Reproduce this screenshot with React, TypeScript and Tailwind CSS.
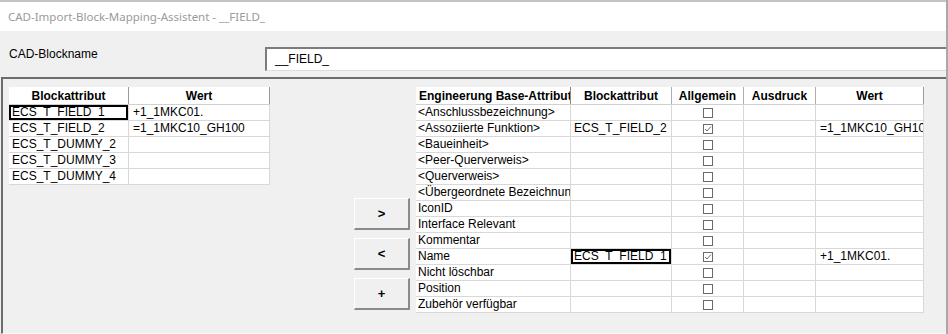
import React from "react";

const leftRows: [string, string][] = [
  ["ECS_T_FIELD_1", "+1_1MKC01."],
  ["ECS_T_FIELD_2", "=1_1MKC10_GH100"],
  ["ECS_T_DUMMY_2", ""],
  ["ECS_T_DUMMY_3", ""],
  ["ECS_T_DUMMY_4", ""],
];

type R = { eb: string; ba: string; chk: boolean; wert: string; focus?: boolean };
const rightRows: R[] = [
  { eb: "<Anschlussbezeichnung>", ba: "", chk: false, wert: "" },
  { eb: "<Assoziierte Funktion>", ba: "ECS_T_FIELD_2", chk: true, wert: "=1_1MKC10_GH10" },
  { eb: "<Baueinheit>", ba: "", chk: false, wert: "" },
  { eb: "<Peer-Querverweis>", ba: "", chk: false, wert: "" },
  { eb: "<Querverweis>", ba: "", chk: false, wert: "" },
  { eb: "<Übergeordnete Bezeichnun", ba: "", chk: false, wert: "" },
  { eb: "IconID", ba: "", chk: false, wert: "" },
  { eb: "Interface Relevant", ba: "", chk: false, wert: "" },
  { eb: "Kommentar", ba: "", chk: false, wert: "" },
  { eb: "Name", ba: "ECS_T_FIELD_1", chk: true, wert: "+1_1MKC01.", focus: true },
  { eb: "Nicht löschbar", ba: "", chk: false, wert: "" },
  { eb: "Position", ba: "", chk: false, wert: "" },
  { eb: "Zubehör verfügbar", ba: "", chk: false, wert: "" },
];

function Check({ on }: { on: boolean }) {
  return (
    <div className="w-[10px] h-[10px] border border-[#6a6a6a] bg-white flex items-center justify-center">
      {on && (
        <svg width="8" height="8" viewBox="0 0 8 8">
          <path d="M1 4 L3 6 L7 1.5" fill="none" stroke="#6a6a6a" strokeWidth="1" />
        </svg>
      )}
    </div>
  );
}

function Focus({ children }: { children: React.ReactNode }) {
  return (
    <div className="relative h-full">
      <div className="absolute inset-0 border-2 border-black pointer-events-none" />
      <div className="absolute right-[-2px] bottom-[-2px] w-[3px] h-[3px] bg-black" />
      {children}
    </div>
  );
}

function Btn({ label }: { label: string }) {
  return (
    <div className="w-[56px] h-[32px] bg-[#f0f0f0] border-t border-l border-t-white border-l-white border-b-2 border-r-2 border-b-[#8a8a8a] border-r-[#8a8a8a] flex items-center justify-center font-bold text-[13px]">
      {label}
    </div>
  );
}

export default function App() {
  return (
    <div className="w-[948px] h-[334px] bg-[#f0f0f0] flex flex-col overflow-hidden font-['Liberation_Sans',Arial,sans-serif] text-[12px] text-black border-r-2 border-r-[#a8a8a8]">
      <div className="h-[2px] bg-[#c4c4c4] shrink-0" />
      <div className="h-[29px] bg-white shrink-0 flex items-center pl-[8px] pt-[1px] text-[#9a9a9a] text-[11.5px] font-['Noto_Sans','Open_Sans',sans-serif]">
        CAD-Import-Block-Mapping-Assistent - __FIELD_
      </div>
      <div className="h-[46px] shrink-0 flex items-start">
        <div className="w-[265px] pl-[9px] pt-[16px] leading-[14px]">CAD-Blockname</div>
        <div className="flex-1 mt-[16px] h-[24px] bg-white border-t-2 border-l-2 border-t-[#7c7c7c] border-l-[#7c7c7c] border-b border-b-[#dcdcdc] flex items-center pl-[8px] pb-[1px]">
          __FIELD_
        </div>
      </div>
      <div className="flex-1 ml-[1px] border-t-2 border-l-2 border-t-[#6c6c6c] border-l-[#6c6c6c] border-b border-b-[#fafafa] flex pt-[8px] pl-[6px]">
        {/* left table */}
        <div className="w-[261px] shrink-0">
          <div className="flex h-[18px] bg-white border-b border-b-[#d0d0d0] font-bold">
            <div className="w-[120px] border-r border-r-[#9a9a9a] flex items-center justify-center">Blockattribut</div>
            <div className="w-[141px] border-r border-r-[#9a9a9a] flex items-center justify-center">Wert</div>
          </div>
          {leftRows.map((r, i) => (
            <div key={i} className="flex h-[16px] bg-white border-b border-b-[#d8d8d8] leading-[15px]">
              <div className="w-[120px] border-r border-r-[#d8d8d8] overflow-hidden whitespace-nowrap">
                {i === 0 ? <Focus><div className="pl-[3px]">{r[0]}</div></Focus> : <div className="pl-[3px]">{r[0]}</div>}
              </div>
              <div className="w-[141px] border-r border-r-[#d8d8d8] pl-[4px] overflow-hidden whitespace-nowrap">{r[1]}</div>
            </div>
          ))}
        </div>
        {/* buttons */}
        <div className="ml-[84px] mt-[111px] flex flex-col gap-[8px] shrink-0">
          <Btn label=">" />
          <Btn label="<" />
          <Btn label="+" />
        </div>
        {/* right table */}
        <div className="ml-[6px] w-[508px] shrink-0">
          <div className="flex h-[18px] bg-white border-b border-b-[#d0d0d0] font-bold">
            <div className="w-[155px] border-r border-r-[#8a8a8a] flex items-center pl-[3px] whitespace-nowrap overflow-hidden">Engineerung Base-Attribut</div>
            <div className="w-[101px] border-r border-r-[#b0b0b0] flex items-center justify-center">Blockattribut</div>
            <div className="w-[72px] border-r border-r-[#b0b0b0] flex items-center justify-center">Allgemein</div>
            <div className="w-[72px] border-r border-r-[#b0b0b0] flex items-center justify-center">Ausdruck</div>
            <div className="w-[108px] border-r border-r-[#9a9a9a] flex items-center justify-center">Wert</div>
          </div>
          {rightRows.map((r, i) => (
            <div key={i} className="flex h-[16px] bg-white border-b border-b-[#d8d8d8] leading-[15px]">
              <div className="w-[155px] border-r border-r-[#d8d8d8] pl-[2px] overflow-hidden whitespace-nowrap">{r.eb}</div>
              <div className="w-[101px] border-r border-r-[#d8d8d8] overflow-hidden whitespace-nowrap">
                {r.focus ? <Focus><div className="pl-[3px]">{r.ba}</div></Focus> : <div className="pl-[3px]">{r.ba}</div>}
              </div>
              <div className="w-[72px] border-r border-r-[#d8d8d8] flex items-center justify-center">
                <Check on={r.chk} />
              </div>
              <div className="w-[72px] border-r border-r-[#d8d8d8]" />
              <div className="w-[108px] border-r border-r-[#d8d8d8] pl-[4px] overflow-hidden whitespace-nowrap">{r.wert}</div>
            </div>
          ))}
        </div>
      </div>
    </div>
  );
}
